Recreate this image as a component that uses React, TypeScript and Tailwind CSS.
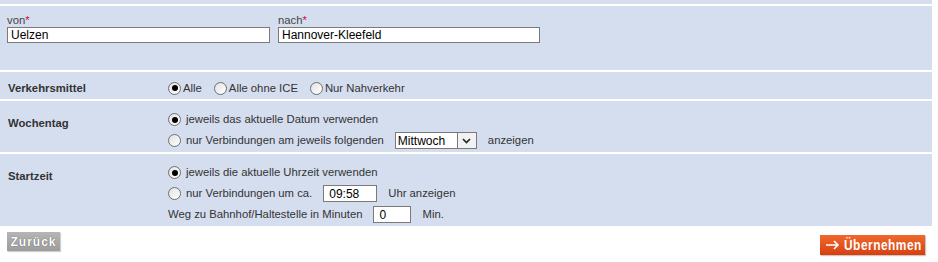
import React from "react";

const Radio = ({ checked }: { checked?: boolean }) => (
  <span className="inline-flex h-[13px] w-[13px] shrink-0 items-center justify-center rounded-full border border-[#6f6f6f] bg-gradient-to-br from-[#e2e2e2] to-white">
    {checked && <span className="block h-[6px] w-[6px] rounded-full bg-black" />}
  </span>
);

const Field = ({ value, className }: { value: string; className: string }) => (
  <div className={`flex items-center border border-[#7a7a7a] bg-white pl-[3px] text-[12px] leading-none text-black ${className}`}>
    {value}
  </div>
);

export default function App() {
  return (
    <div
      className="w-[938px] h-[262px] bg-white text-[11.3px] text-[#333] overflow-hidden"
      style={{ fontFamily: '"Liberation Sans", Arial, sans-serif' }}
    >
      <div className="flex w-[932px] flex-col gap-[2px]">
        <div className="h-[4px] bg-[#d5deef]" />
        {/* von / nach */}
        <div className="flex h-[64px] gap-[8px] bg-[#d5deef] pl-[7px] pt-[8px]">
          <div className="flex flex-col">
            <div className="h-[13px] leading-[13px] text-[#444]">
              von<span className="text-[#d0103a]">*</span>
            </div>
            <Field value="Uelzen" className="h-[16px] w-[263px]" />
          </div>
          <div className="flex flex-col">
            <div className="h-[13px] leading-[13px] text-[#444]">
              nach<span className="text-[#d0103a]">*</span>
            </div>
            <Field value="Hannover-Kleefeld" className="h-[16px] w-[262px]" />
          </div>
        </div>
        {/* Verkehrsmittel */}
        <div className="flex h-[27px] items-center bg-[#d5deef] pt-[5px]">
          <div className="w-[168px] pl-[8px] font-bold">Verkehrsmittel</div>
          <div className="flex items-center">
            <Radio checked />
            <span className="ml-[2px] mr-[12px]">Alle</span>
            <Radio />
            <span className="ml-[2px] mr-[12px]">Alle ohne ICE</span>
            <Radio />
            <span className="ml-[2px]">Nur Nahverkehr</span>
          </div>
        </div>
        {/* Wochentag */}
        <div className="flex h-[51px] bg-[#d5deef]">
          <div className="w-[168px] pl-[8px] pt-[14px] font-bold">Wochentag</div>
          <div className="flex flex-col gap-[4px] pt-[10px]">
            <div className="flex h-[17px] items-center gap-[5px]">
              <Radio checked />
              <span>jeweils das aktuelle Datum verwenden</span>
            </div>
            <div className="flex h-[17px] items-center">
              <Radio />
              <span className="ml-[5px] mr-[11px]">nur Verbindungen am jeweils folgenden</span>
              <div className="flex h-[17px] w-[82px] border border-[#7a7a7a] bg-white">
                <div className="flex flex-1 items-center pl-[2px] text-[12px] text-black">Mittwoch</div>
                <div className="flex w-[19px] items-center justify-center border-l border-[#7a7a7a] bg-[#f2f2f2]">
                  <svg width="9" height="6" viewBox="0 0 9 6">
                    <path d="M1 1 L4.5 4.5 L8 1" fill="none" stroke="#222" strokeWidth="1.6" />
                  </svg>
                </div>
              </div>
              <span className="ml-[11px]">anzeigen</span>
            </div>
          </div>
        </div>
        {/* Startzeit */}
        <div className="flex h-[72px] bg-[#d5deef]">
          <div className="w-[168px] pl-[8px] pt-[14px] font-bold">Startzeit</div>
          <div className="flex flex-col gap-[4px] pt-[10px]">
            <div className="flex h-[17px] items-center gap-[5px]">
              <Radio checked />
              <span>jeweils die aktuelle Uhrzeit verwenden</span>
            </div>
            <div className="flex h-[17px] items-center">
              <Radio />
              <span className="ml-[5px] mr-[11px]">nur Verbindungen um ca.</span>
              <Field value="09:58" className="h-[17px] w-[54px] pl-[5px]" />
              <span className="ml-[11px]">Uhr anzeigen</span>
            </div>
            <div className="flex h-[17px] items-center">
              <span className="mr-[11px]">Weg zu Bahnhof/Haltestelle in Minuten</span>
              <Field value="0" className="h-[17px] w-[38px] pl-[5px]" />
              <span className="ml-[11px]">Min.</span>
            </div>
          </div>
        </div>
      </div>
      {/* buttons */}
      <div className="flex w-[932px] items-start justify-between pl-[7px] pr-[7px] pt-[6px]">
        <div
          className="flex h-[19px] w-[53px] items-center justify-center bg-gradient-to-b from-[#b6b6b6] to-[#9c9c9c] text-[12px] font-bold tracking-[1px] text-white shadow-[1px_1px_1px_#d0d0d0]"
          style={{ textShadow: "0 0 1px #444" }}
        >
          Zurück
        </div>
        <div className="mt-[3px] flex h-[20px] w-[105px] items-center overflow-hidden pl-[6px] bg-gradient-to-b from-[#f0692c] to-[#d63f0e] font-bold text-white shadow-[1px_1px_1px_#c8c8c8]">
          <svg className="shrink-0" width="14" height="10" viewBox="0 0 14 10">
            <path d="M0 5 H12 M8 1 L12 5 L8 9" fill="none" stroke="#fff" strokeWidth="1.6" />
          </svg>
          <span className="ml-[4px] inline-block w-[78px] shrink-0 origin-left scale-x-[0.85] whitespace-nowrap text-[14px] leading-none tracking-[0.6px]">Übernehmen</span>
        </div>
      </div>
    </div>
  );
}
